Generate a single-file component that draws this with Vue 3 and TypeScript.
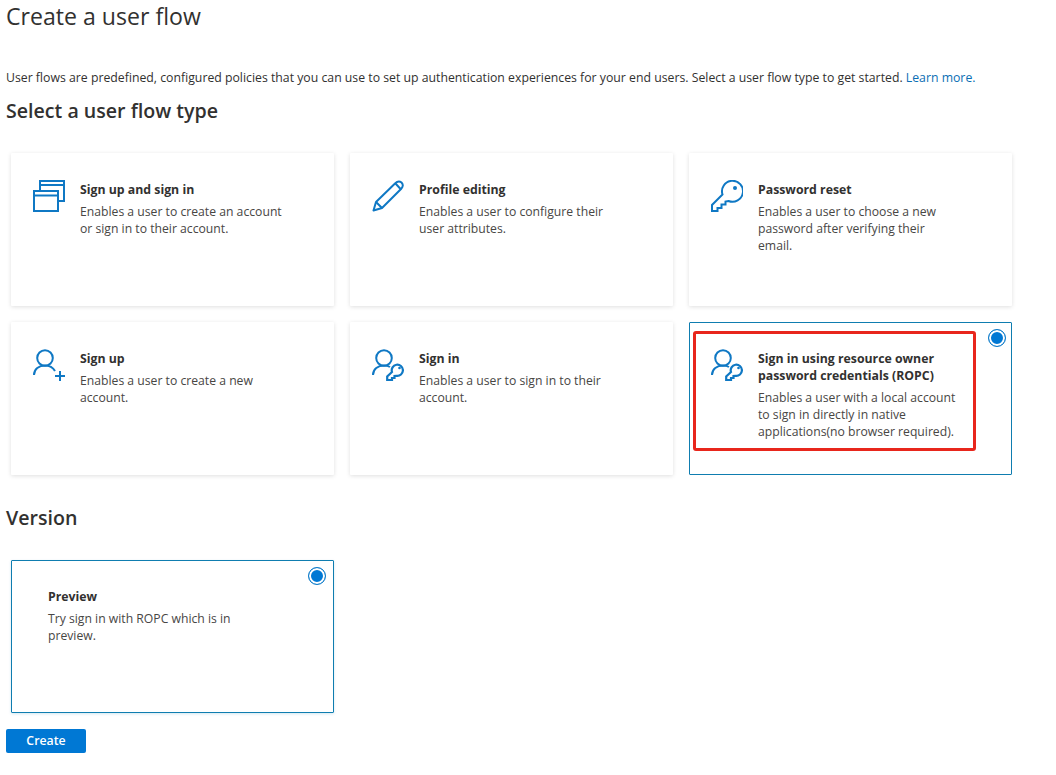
<script setup lang="ts">
interface Flow {
  icon: string;
  title: string[];
  lines: string[];
  selected?: boolean;
}

const flows: Flow[] = [
  { icon: "windows", title: ["Sign up and sign in"], lines: ["Enables a user to create an account", "or sign in to their account."] },
  { icon: "pencil", title: ["Profile editing"], lines: ["Enables a user to configure their", "user attributes."] },
  { icon: "key", title: ["Password reset"], lines: ["Enables a user to choose a new", "password after verifying their", "email."] },
  { icon: "userplus", title: ["Sign up"], lines: ["Enables a user to create a new", "account."] },
  { icon: "userkey", title: ["Sign in"], lines: ["Enables a user to sign in to their", "account."] },
  {
    icon: "userkey",
    title: ["Sign in using resource owner", "password credentials (ROPC)"],
    lines: ["Enables a user with a local account", "to sign in directly in native", "applications(no browser required)."],
    selected: true,
  },
];
</script>

<template>
  <main class="page">
    <h1 class="title">Create a user flow</h1>
    <p class="intro">
      User flows are predefined, configured policies that you can use to set up authentication experiences for your end users. Select a user flow type to get started.
      <a class="link">Learn more.</a>
    </p>
    <h2 class="section first">Select a user flow type</h2>

    <div class="grid">
      <div v-for="flow in flows" :key="flow.title[0]" class="card" :class="{ selected: flow.selected }">
        <svg class="icon" viewBox="0 0 32 32" width="32" height="32" fill="none" stroke="#0f78c4" stroke-width="2">
          <template v-if="flow.icon === 'windows'">
            <path d="M7 10V1H31V21H25" />
            <path d="M7 5H31" />
            <rect x="1" y="11" width="24" height="20" />
            <path d="M1 15.5H25" />
          </template>
          <template v-else-if="flow.icon === 'pencil'">
            <path d="M1.5 30.5L4 22L23 3.5C25 1.5 27.5 1 29.5 2.5C31.5 4.5 31 7 29 9L10 28Z" stroke-linejoin="round" />
            <path d="M4 22L10 28M23.5 3.5L29 9.5" />
          </template>
          <template v-else-if="flow.icon === 'key'">
            <path d="M11.5 14.5A10.5 10.5 0 1 1 17.5 21L14.5 21.5V24.5H10.5V28H6.5V31H1V25Z" />
            <circle cx="24" cy="8" r="2" fill="#0f78c4" stroke="none" />
          </template>
          <template v-else-if="flow.icon === 'userplus'">
            <circle cx="12" cy="9" r="7.8" />
            <path d="M1 26C1 20 6 16.5 12 16.5C16 16.5 20 18.5 22 22" />
            <path d="M27 22V32M22 27H32" />
          </template>
          <template v-else>
            <circle cx="12" cy="9" r="7.8" />
            <path d="M1 26C1 20 6 16.5 12 16.5C14.5 16.5 16.5 17 18 18" />
            <path d="M20 23A5.6 5.6 0 1 1 24.5 26.8L22.5 27V29H20V31H15.2V27.5Z" stroke-width="2.2" />
            <circle cx="27.5" cy="19" r="1.3" fill="#0f78c4" stroke="none" />
          </template>
        </svg>
        <div class="text">
          <div v-for="t in flow.title" :key="t" class="card-title">{{ t }}</div>
          <div class="desc">
            <div v-for="l in flow.lines" :key="l">{{ l }}</div>
          </div>
        </div>
        <span v-if="flow.selected" class="radio"></span>
        <span v-if="flow.selected" class="highlight"></span>
      </div>
    </div>

    <h2 class="section version">Version</h2>

    <div class="card preview selected">
      <div class="text">
        <div class="card-title">Preview</div>
        <div class="desc">
          <div>Try sign in with ROPC which is in</div>
          <div>preview.</div>
        </div>
      </div>
      <span class="radio"></span>
    </div>

    <button class="create" type="button">Create</button>
  </main>
</template>

<style scoped>
.page {
  box-sizing: border-box;
  width: 1056px;
  height: 775px;
  padding-left: 6px;
  overflow: hidden;
  background: #fff;
  color: #323130;
  font-family: "Open Sans", "Noto Sans", sans-serif;
}
.title {
  margin: 0;
  height: 34px;
  font-size: 23.1px;
  line-height: 32px;
  font-weight: 500;
}
.intro {
  margin: 35px 0 0;
  font-size: 12.28px;
  line-height: 17px;
  white-space: nowrap;
  color: #323130;
}
.link {
  color: #0a6eb4;
}
.section {
  margin: 0;
  font-size: 19.6px;
  line-height: 26px;
  font-weight: 600;
}
.first {
  margin-top: 12px;
}
.version {
  margin-top: 30px;
}
.grid {
  display: grid;
  grid-template-columns: repeat(3, 323px);
  grid-auto-rows: 153px;
  gap: 16px;
  margin: 29px 0 0 5px;
}
.card {
  position: relative;
  box-sizing: border-box;
  display: flex;
  padding: 27px 22px 0;
  background: #fff;
  border-radius: 1px;
  box-shadow: 0 1px 4px rgba(0, 0, 0, 0.13);
}
.card.selected {
  border: 1px solid #0f7db0;
  padding: 26px 21px 0;
  box-shadow: none;
}
.icon {
  flex: none;
  margin-right: 15px;
}
.text {
  padding-top: 1px;
}
.card-title {
  font-size: 12.3px;
  line-height: 17px;
  font-weight: 700;
  white-space: nowrap;
}
.desc {
  margin-top: 5px;
  font-size: 12.2px;
  line-height: 17px;
  color: #484644;
  white-space: nowrap;
}
.radio {
  position: absolute;
  top: 6px;
  right: 5px;
  box-sizing: border-box;
  width: 18px;
  height: 18px;
  border: 1.5px solid #0f7cc8;
  border-radius: 50%;
  background: #0078d4;
  box-shadow: inset 0 0 0 2px #fff;
}
.preview .radio {
  right: 7px;
}
.highlight {
  position: absolute;
  left: 3px;
  top: 8px;
  width: 283px;
  height: 120px;
  box-sizing: border-box;
  border: 3px solid #e8261c;
  border-radius: 3px;
}
.card.preview {
  width: 323px;
  height: 153px;
  margin: 29px 0 0 5px;
  padding: 26px 36px 0;
  box-shadow: 0 1px 3px rgba(0, 120, 180, 0.18);
}
.create {
  display: block;
  width: 80px;
  height: 24px;
  margin-top: 16px;
  padding: 0 0 2px;
  border: 0;
  border-radius: 2px;
  background: #0078d4;
  color: #fff;
  font-family: inherit;
  font-size: 12.3px;
  font-weight: 600;
}
</style>
